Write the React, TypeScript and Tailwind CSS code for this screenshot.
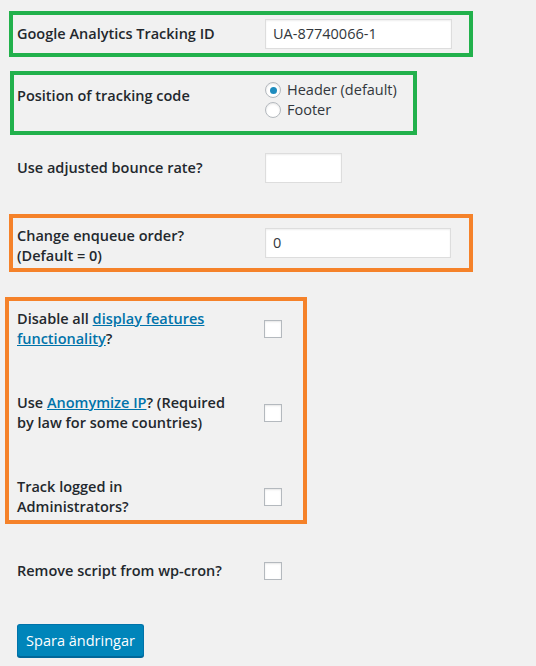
const font = { fontFamily: '"Open Sans", "Noto Sans", sans-serif' };

const Input = ({ value, w }: { value?: string; w: string }) => (
  <div
    className={`${w} h-[30px] bg-white border border-[#dddddd] shadow-[inset_0_1px_2px_rgba(0,0,0,0.07)] flex items-center px-[7px] text-[14.5px] text-[#32373c]`}
  >
    {value}
  </div>
);

const Checkbox = () => (
  <div className="w-[18px] h-[18px] bg-white border border-[#b4b9be] shadow-[inset_0_1px_2px_rgba(0,0,0,0.1)]" />
);

const Radio = ({ checked }: { checked?: boolean }) => (
  <div className="w-[16px] h-[16px] rounded-full bg-white border border-[#b4b9be] shadow-[inset_0_1px_2px_rgba(0,0,0,0.1)] flex items-center justify-center">
    {checked && <div className="w-[7px] h-[7px] rounded-full bg-[#1e8cbe]" />}
  </div>
);

const Link = ({ children }: { children: React.ReactNode }) => (
  <span className="text-[#0073aa] underline font-semibold">{children}</span>
);

export default function App() {
  return (
    <div style={font} className="min-h-[666px] w-[536px] bg-[#f1f1f1] pt-[11px] text-[#23282d] text-[14.5px]">
      {/* Tracking ID */}
      <div className="ml-[9px] w-[464px] h-[46px] border-4 border-[#22b14c] flex items-center">
        <div className="w-[252px] pl-[4px] font-semibold">Google Analytics Tracking ID</div>
        <Input value="UA-87740066-1" w="w-[187px]" />
      </div>

      {/* Position */}
      <div className="mt-[14px] ml-[10px] w-[407px] h-[64px] border-4 border-[#22b14c] flex items-start">
        <div className="w-[251px] pl-[3px] pt-[11px] leading-[20px] font-semibold">Position of tracking code</div>
        <div className="flex flex-col pt-[5px]">
          <div className="flex items-center gap-[6px] h-[20px]">
            <Radio checked />
            <span className="text-[#32373c]">Header (default)</span>
          </div>
          <div className="flex items-center gap-[6px] h-[20px]">
            <Radio />
            <span className="text-[#32373c]">Footer</span>
          </div>
        </div>
      </div>

      {/* Bounce rate */}
      <div className="mt-[18px] ml-[17px] flex items-center h-[30px]">
        <div className="w-[248px] font-semibold">Use adjusted bounce rate?</div>
        <Input w="w-[77px]" />
      </div>

      {/* Enqueue order */}
      <div className="mt-[31px] ml-[9px] w-[464px] h-[58px] border-4 border-[#f5822a] flex items-center">
        <div className="w-[252px] pl-[4px] font-semibold leading-[20px] pt-[5px]">
          Change enqueue order?
          <br />
          (Default = 0)
        </div>
        <Input value="0" w="w-[186px]" />
      </div>

      {/* Checkbox group */}
      <div className="mt-[25px] ml-[5px] w-[302px] h-[227px] border-4 border-[#f5822a] pt-[8px] flex flex-col gap-[44px]">
        <div className="h-[40px] flex items-center">
          <div className="w-[255px] pl-[8px] font-semibold leading-[20px]">
            Disable all <Link>display features</Link>
            <br />
            <Link>functionality</Link>?
          </div>
          <Checkbox />
        </div>
        <div className="h-[40px] flex items-center">
          <div className="w-[255px] pl-[8px] font-semibold leading-[20px]">
            Use <Link>Anomymize IP</Link>? (Required
            <br />
            by law for some countries)
          </div>
          <Checkbox />
        </div>
        <div className="h-[40px] flex items-center">
          <div className="w-[255px] pl-[8px] font-semibold leading-[20px]">
            Track logged in
            <br />
            Administrators?
          </div>
          <Checkbox />
        </div>
      </div>

      {/* wp-cron */}
      <div className="mt-[37px] ml-[17px] flex items-center h-[20px]">
        <div className="w-[247px] font-semibold">Remove script from wp-cron?</div>
        <Checkbox />
      </div>

      {/* Submit */}
      <button className="mt-[43px] ml-[17px] w-[127px] h-[33px] rounded-[3px] bg-[#0085ba] border border-[#0073aa] border-b-[#006799] shadow-[0_1px_0_#006799] text-white text-[14.5px] flex items-center justify-center">
        Spara ändringar
      </button>
    </div>
  );
}
